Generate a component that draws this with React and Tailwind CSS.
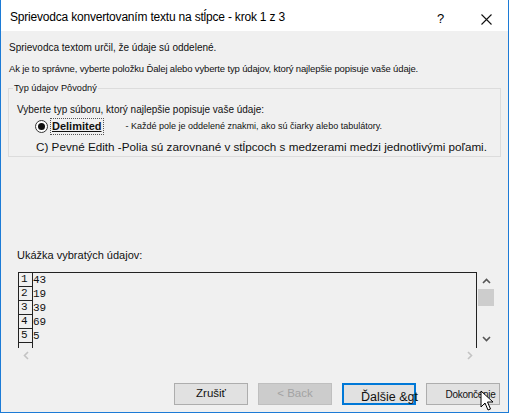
import React from 'react'

const rows = ['43', '19', '39', '69', '5']

function Cursor() {
  return (
    <svg className="absolute left-[480px] top-[390px]" width="14" height="22" viewBox="0 0 14 22">
      <path d="M1 1 L1 17 L5 13 L8 20 L10.5 19 L7.5 12 L13 12 Z" fill="#fff" stroke="#000" strokeWidth="1" strokeLinejoin="round" />
    </svg>
  )
}

export default function App() {
  return (
    <div className="relative w-[510px] h-[415px] bg-white overflow-hidden" style={{ fontFamily: '"Liberation Sans", Arial, sans-serif' }}>
      <div className="w-[509px] h-[413px] border-x border-b border-[#1c7bd6] flex flex-col bg-[#f0f0f0] text-[#111]">
        {/* title bar */}
        <div className="h-[31px] shrink-0 bg-white flex items-center pl-[9px] pt-[3px] relative">
          <span className="text-[12px] tracking-[-0.2px] text-black">Sprievodca konvertovaním textu na stĺpce - krok 1 z 3</span>
          <span className="absolute left-[436px] top-[9px] text-[13px] text-black">?</span>
          <svg className="absolute left-[480px] top-[14px]" width="11" height="11" viewBox="0 0 11 11">
            <path d="M0.5 0.5 L10.5 10.5 M10.5 0.5 L0.5 10.5" stroke="#111" strokeWidth="1.1" />
          </svg>
        </div>

        {/* intro */}
        <div className="pl-[8px] pt-[10px] text-[10px] leading-[14px]">Sprievodca textom určil, že údaje sú oddelené.</div>
        <div className="pl-[8px] pt-[7px] text-[9.5px] tracking-[-0.15px] leading-[14px]">Ak je to správne, vyberte položku Ďalej alebo vyberte typ údajov, ktorý najlepšie popisuje vaše údaje.</div>

        {/* group box */}
        <fieldset className="mx-[7px] mt-[6px] border border-[#dcdcdc] pl-[8px] pb-[1px] relative">
          <legend className="text-[9.2px] px-[1px] -ml-[4px] leading-[12px]">Typ údajov Pôvodný</legend>
          <div className="text-[10px] leading-[14px] mt-[9px]">Vyberte typ súboru, ktorý najlepšie popisuje vaše údaje:</div>
          <div className="flex items-center mt-[1px] ml-[18px] h-[17px]">
            <span className="w-[13px] h-[13px] rounded-full border border-[#333] bg-white flex items-center justify-center">
              <span className="w-[7px] h-[7px] rounded-full bg-[#111]" />
            </span>
            <span className="ml-[2px] px-[1px] border border-dotted border-[#555] text-[11px] font-bold underline leading-[15px]">Delimited</span>
            <span className="ml-[22px] text-[9px]">- Každé pole je oddelené znakmi, ako sú čiarky alebo tabulátory.</span>
          </div>
          <div className="ml-[19px] mt-[4px] text-[11.7px] leading-[16px] whitespace-nowrap">C) Pevné Edith -Polia sú zarovnané v stĺpcoch s medzerami medzi jednotlivými poľami.</div>
        </fieldset>

        <div className="flex-1" />

        {/* preview */}
        <div className="pl-[16px] text-[11px] leading-[14px]">Ukážka vybratých údajov:</div>
        <div className="flex mt-[10px] ml-[17px] h-[76px]">
          <div className="w-[459px] border-l border-t border-r border-[#222] bg-[#f0f0f0] overflow-hidden">
            {rows.map((v, i) => (
              <div key={i} className="flex h-[14px] items-center" style={{ fontFamily: '"Liberation Mono", "Courier New", monospace' }}>
                <div className="w-[14px] h-[14px] border-r border-b border-[#222] text-[11px] leading-[13px] pl-[2px]">{i + 1}</div>
                <div className="text-[11px] leading-[13px]">{v}</div>
              </div>
            ))}
            <div className="w-[14px] h-[14px] border-r border-[#222]" />
          </div>
          <div className="w-[16px] ml-[1px] flex flex-col items-center">
            <svg className="mt-[6px]" width="9" height="6" viewBox="0 0 9 6"><path d="M1 5 L4.5 1.5 L8 5" fill="none" stroke="#555" strokeWidth="1.6" /></svg>
            <div className="w-[16px] h-[17px] bg-[#cdcdcd] mt-[5px]" />
            <div className="flex-1" />
            <svg className="mb-[6px]" width="9" height="6" viewBox="0 0 9 6"><path d="M1 1 L4.5 4.5 L8 1" fill="none" stroke="#555" strokeWidth="1.6" /></svg>
          </div>
        </div>
        <div className="flex justify-between ml-[22px] w-[450px] h-[14px] items-center">
          <svg width="6" height="9" viewBox="0 0 6 9"><path d="M5 1 L1.5 4.5 L5 8" fill="none" stroke="#c3c3c3" strokeWidth="1.6" /></svg>
          <svg width="6" height="9" viewBox="0 0 6 9"><path d="M1 1 L4.5 4.5 L1 8" fill="none" stroke="#c3c3c3" strokeWidth="1.6" /></svg>
        </div>

        {/* buttons */}
        <div className="flex mt-[21px] mb-[7px] ml-[173px] gap-[10px] text-[11.5px]">
          <div className="w-[74px] h-[22px] bg-[#e1e1e1] border border-[#adadad] flex items-center justify-center">Zrušiť</div>
          <div className="w-[74px] h-[22px] bg-[#cccccc] border border-[#bfbfbf] text-[#a3a3a3] flex items-center justify-center">&lt; Back</div>
          <div className="w-[74px] h-[22px] bg-[#e1e1e1] border-2 border-[#0078d7] flex pl-[17px]">
            <span className="text-[12.5px] leading-[15px] mt-[5px] whitespace-nowrap">Ďalšie &amp;gt</span>
          </div>
          <div className="w-[74px] h-[22px] bg-[#e1e1e1] border border-[#adadad] flex items-center justify-center text-[10px] tracking-[-0.3px] pl-[15px]">Dokončenie</div>
        </div>
      </div>
      <Cursor />
    </div>
  )
}
